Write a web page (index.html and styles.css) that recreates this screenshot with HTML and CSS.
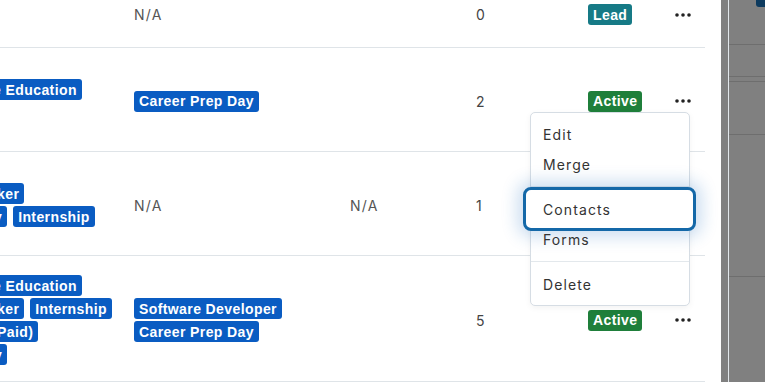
FILE: index.html
```html
<!DOCTYPE html>
<html lang="en">
<head>
<meta charset="utf-8">
<title>Records</title>
<link rel="stylesheet" href="styles.css">
</head>
<body>
<div class="screen">
  <section class="panel">
    <div class="table">
      <div class="row row--short">
        <div class="cell tags"><span class="badge">Alumni</span></div>
        <div class="cell text">N/A</div>
        <div class="cell text"></div>
        <div class="cell num">0</div>
        <div class="cell"><span class="status status--lead">Lead</span></div>
        <div class="cell"><button class="more" aria-label="More actions"><svg width="16" height="4" viewBox="0 0 16 4"><circle cx="2" cy="2" r="1.8"/><circle cx="8" cy="2" r="1.8"/><circle cx="14" cy="2" r="1.8"/></svg></button></div>
      </div>
      <div class="row">
        <div class="cell tags"><span class="badge">Cooperative Education</span><span class="badge">Alumni</span></div>
        <div class="cell tags"><span class="badge">Career Prep Day</span></div>
        <div class="cell text"></div>
        <div class="cell num">2</div>
        <div class="cell"><span class="status status--active">Active</span></div>
        <div class="cell"><button class="more" aria-label="More actions"><svg width="16" height="4" viewBox="0 0 16 4"><circle cx="2" cy="2" r="1.8"/><circle cx="8" cy="2" r="1.8"/><circle cx="14" cy="2" r="1.8"/></svg></button></div>
      </div>
      <div class="row">
        <div class="cell tags"><span class="badge">Guest Speaker</span><span class="badge">Careers Day</span><span class="badge">Internship</span></div>
        <div class="cell text">N/A</div>
        <div class="cell text">N/A</div>
        <div class="cell num">1</div>
        <div class="cell"><span class="status status--active">Active</span></div>
        <div class="cell"><button class="more" aria-label="More actions"><svg width="16" height="4" viewBox="0 0 16 4"><circle cx="2" cy="2" r="1.8"/><circle cx="8" cy="2" r="1.8"/><circle cx="14" cy="2" r="1.8"/></svg></button></div>
      </div>
      <div class="row">
        <div class="cell tags"><span class="badge">Cooperative Education</span><span class="badge">Guest Speaker</span><span class="badge">Internship</span><span class="badge">Internship (Paid)</span><span class="badge">Careers Day</span></div>
        <div class="cell tags"><span class="badge">Software Developer</span><span class="badge">Career Prep Day</span></div>
        <div class="cell text"></div>
        <div class="cell num">5</div>
        <div class="cell"><span class="status status--active">Active</span></div>
        <div class="cell"><button class="more" aria-label="More actions"><svg width="16" height="4" viewBox="0 0 16 4"><circle cx="2" cy="2" r="1.8"/><circle cx="8" cy="2" r="1.8"/><circle cx="14" cy="2" r="1.8"/></svg></button></div>
      </div>
    </div>
    <ul class="menu">
      <li class="menu-item"><span>Edit</span></li>
      <li class="menu-item"><span>Merge</span></li>
      <li class="menu-sep"></li>
      <li class="menu-item menu-item--focus"><span>Contacts</span></li>
      <li class="menu-item"><span>Forms</span></li>
      <li class="menu-sep"></li>
      <li class="menu-item"><span>Delete</span></li>
    </ul>
  </section>
  <aside class="backdrop">
    <div class="behind">
      <div class="behind-block b1"><div class="peek"></div></div>
      <div class="behind-block b2"></div>
      <div class="behind-block b3"></div>
      <div class="behind-block b4"></div>
      <div class="behind-block b5"></div>
    </div>
  </aside>
</div>
</body>
</html>
```
FILE: styles.css
```css
html, body {
  margin: 0;
  background: #ffffff;
  font-family: Inter, "Open Sans", sans-serif;
}
.screen {
  display: flex;
  height: 382px;
  overflow: hidden;
}
.panel {
  flex: none;
  width: 721px;
  position: relative;
  overflow: hidden;
  background: #ffffff;
}
.table {
  margin: -21px 0 0 -89px;
  width: 794px;
}
.row {
  display: grid;
  grid-template-columns: 223px 216px 126px 112px 84px 33px;
  align-items: center;
  box-sizing: border-box;
  min-height: 104px;
  padding: 19px 0 16px;
  border-bottom: 1px solid #dfe4e8;
}
.row--short {
  min-height: 69px;
}
.tags {
  display: flex;
  flex-wrap: wrap;
  gap: 2px 6px;
  padding-right: 16px;
}
.badge, .status {
  display: inline-flex;
  align-items: center;
  box-sizing: border-box;
  height: 21px;
  padding: 0 5px;
  border-radius: 3px;
  background: #0a5cc2;
  color: #ffffff;
  font: bold 14px "Liberation Sans", Arial, sans-serif;
  letter-spacing: 0.4px;
  white-space: nowrap;
}
.status--lead { background: #167a86; }
.status--active { background: #1f7f3b; }
.text {
  font-size: 14px;
  color: #555555;
  letter-spacing: 1.3px;
}
.num {
  font-size: 14px;
  color: #444444;
}
.more {
  display: flex;
  margin: 0 0 0 3px;
  padding: 0;
  border: 0;
  background: none;
  fill: #222222;
}
.menu {
  position: absolute;
  left: 530px;
  top: 112px;
  width: 160px;
  box-sizing: border-box;
  margin: 0;
  padding: 6px 0 6px;
  list-style: none;
  background: #ffffff;
  border: 1px solid #d6dde4;
  border-radius: 5px;
  box-shadow: 0 2px 6px rgba(0, 0, 0, 0.05);
}
.menu-item {
  position: relative;
  display: flex;
  align-items: center;
  height: 30px;
  padding-left: 12px;
  font-size: 14px;
  color: #333333;
  letter-spacing: 1.1px;
}
.menu-item span {
  position: relative;
  z-index: 1;
}
.menu-item--focus::before {
  content: "";
  position: absolute;
  inset: -7px -7px -7px -8px;
  background: #ffffff;
  border: 3px solid #1468a8;
  border-radius: 8px;
  box-shadow: 0 0 16px 6px rgba(30, 110, 190, 0.22);
}
.menu-sep {
  height: 1px;
  margin: 7px 0 7px;
  background: #e3e8ec;
}
.backdrop {
  flex: 1;
  box-sizing: border-box;
  padding-left: 7px;
  background: #808080;
}
.behind {
  height: 100%;
  border-left: 1px solid #e2e7eb;
}
.behind-block {
  box-sizing: border-box;
  border-bottom: 1px solid #6e6e6e;
}
.b1 { height: 45px; display: flex; justify-content: flex-end; align-items: flex-start; }
.b2 { height: 32px; }
.b3 { height: 5px; }
.b4 { height: 53px; }
.b5 { height: 142px; }
.peek {
  width: 9px;
  height: 7px;
  background: #0d3a5e;
  border-radius: 0 0 0 3px;
}
```
